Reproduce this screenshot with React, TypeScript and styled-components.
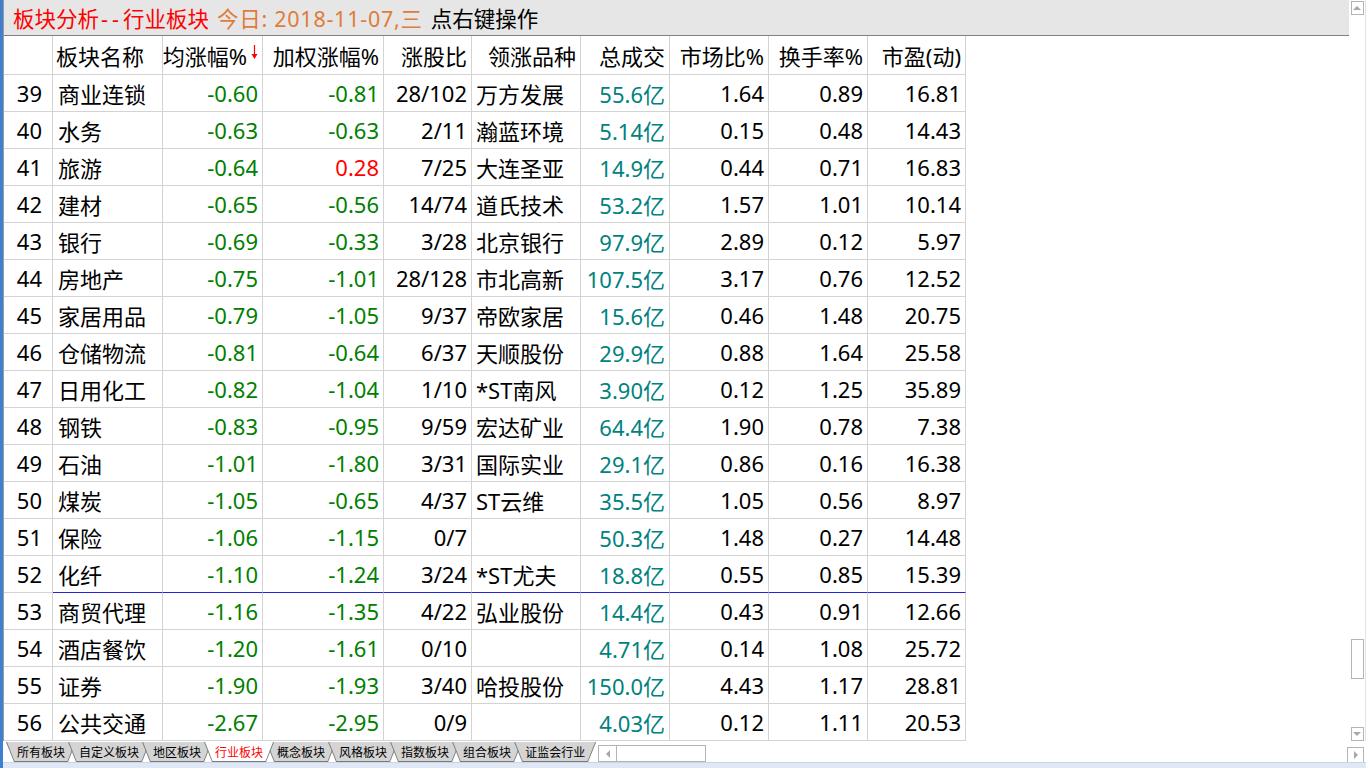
import styled, { createGlobalStyle } from "styled-components";

const GlobalStyle = createGlobalStyle`
  html, body {
    margin: 0;
    padding: 0;
    background: #ffffff;
    overflow: hidden;
  }
  body {
    font-family: "Noto Sans", "Noto Sans CJK SC", sans-serif;
  }
`;

const COLS = "49px 110px 100px 121px 88px 109px 89px 99px 99px 98px";

type Row = {
  no: number;
  name: string;
  avg: string;
  weighted: string;
  up: string;
  leader: string;
  volume: string;
  share: string;
  turnover: string;
  pe: string;
};

const rows: Row[] = [
  { no: 39, name: "商业连锁", avg: "-0.60", weighted: "-0.81", up: "28/102", leader: "万方发展", volume: "55.6亿", share: "1.64", turnover: "0.89", pe: "16.81" },
  { no: 40, name: "水务", avg: "-0.63", weighted: "-0.63", up: "2/11", leader: "瀚蓝环境", volume: "5.14亿", share: "0.15", turnover: "0.48", pe: "14.43" },
  { no: 41, name: "旅游", avg: "-0.64", weighted: "0.28", up: "7/25", leader: "大连圣亚", volume: "14.9亿", share: "0.44", turnover: "0.71", pe: "16.83" },
  { no: 42, name: "建材", avg: "-0.65", weighted: "-0.56", up: "14/74", leader: "道氏技术", volume: "53.2亿", share: "1.57", turnover: "1.01", pe: "10.14" },
  { no: 43, name: "银行", avg: "-0.69", weighted: "-0.33", up: "3/28", leader: "北京银行", volume: "97.9亿", share: "2.89", turnover: "0.12", pe: "5.97" },
  { no: 44, name: "房地产", avg: "-0.75", weighted: "-1.01", up: "28/128", leader: "市北高新", volume: "107.5亿", share: "3.17", turnover: "0.76", pe: "12.52" },
  { no: 45, name: "家居用品", avg: "-0.79", weighted: "-1.05", up: "9/37", leader: "帝欧家居", volume: "15.6亿", share: "0.46", turnover: "1.48", pe: "20.75" },
  { no: 46, name: "仓储物流", avg: "-0.81", weighted: "-0.64", up: "6/37", leader: "天顺股份", volume: "29.9亿", share: "0.88", turnover: "1.64", pe: "25.58" },
  { no: 47, name: "日用化工", avg: "-0.82", weighted: "-1.04", up: "1/10", leader: "*ST南风", volume: "3.90亿", share: "0.12", turnover: "1.25", pe: "35.89" },
  { no: 48, name: "钢铁", avg: "-0.83", weighted: "-0.95", up: "9/59", leader: "宏达矿业", volume: "64.4亿", share: "1.90", turnover: "0.78", pe: "7.38" },
  { no: 49, name: "石油", avg: "-1.01", weighted: "-1.80", up: "3/31", leader: "国际实业", volume: "29.1亿", share: "0.86", turnover: "0.16", pe: "16.38" },
  { no: 50, name: "煤炭", avg: "-1.05", weighted: "-0.65", up: "4/37", leader: "ST云维", volume: "35.5亿", share: "1.05", turnover: "0.56", pe: "8.97" },
  { no: 51, name: "保险", avg: "-1.06", weighted: "-1.15", up: "0/7", leader: "", volume: "50.3亿", share: "1.48", turnover: "0.27", pe: "14.48" },
  { no: 52, name: "化纤", avg: "-1.10", weighted: "-1.24", up: "3/24", leader: "*ST尤夫", volume: "18.8亿", share: "0.55", turnover: "0.85", pe: "15.39" },
  { no: 53, name: "商贸代理", avg: "-1.16", weighted: "-1.35", up: "4/22", leader: "弘业股份", volume: "14.4亿", share: "0.43", turnover: "0.91", pe: "12.66" },
  { no: 54, name: "酒店餐饮", avg: "-1.20", weighted: "-1.61", up: "0/10", leader: "", volume: "4.71亿", share: "0.14", turnover: "1.08", pe: "25.72" },
  { no: 55, name: "证券", avg: "-1.90", weighted: "-1.93", up: "3/40", leader: "哈投股份", volume: "150.0亿", share: "4.43", turnover: "1.17", pe: "28.81" },
  { no: 56, name: "公共交通", avg: "-2.67", weighted: "-2.95", up: "0/9", leader: "", volume: "4.03亿", share: "0.12", turnover: "1.11", pe: "20.53" },
];

const tabs = ["所有板块", "自定义板块", "地区板块", "行业板块", "概念板块", "风格板块", "指数板块", "组合板块", "证监会行业"];

const MARKED_ROW = 52;

const changeColor = (v: string) => (v.startsWith("-") ? "#008000" : "#ff0000");

function SortArrow() {
  return (
    <svg width="7" height="16" viewBox="0 0 7 16">
      <path d="M3.5 1 V12" stroke="#ff0000" strokeWidth="1.2" />
      <path d="M0.5 10 L3.5 15 L6.5 10 Z" fill="#ff0000" />
    </svg>
  );
}

function App() {
  return (
    <>
      <GlobalStyle />
      <Screen>
        <Body>
          <Main>
            <TitleBar>
              <TitleText $color="#ff0000">
                板块分析<Dash>--</Dash>行业板块
              </TitleText>
              <TitleText $color="#e07b39" $spacing="0.75px">
                今日: 2018-11-07,三
              </TitleText>
              <TitleText $color="#000000">点右键操作</TitleText>
            </TitleBar>
            <HeaderRow>
              <HeadCell />
              <HeadCell $align="left">板块名称</HeadCell>
              <HeadCell>
                均涨幅%
                <ArrowBox>
                  <SortArrow />
                </ArrowBox>
              </HeadCell>
              <HeadCell>加权涨幅%</HeadCell>
              <HeadCell>涨股比</HeadCell>
              <HeadCell>领涨品种</HeadCell>
              <HeadCell>总成交</HeadCell>
              <HeadCell>市场比%</HeadCell>
              <HeadCell>换手率%</HeadCell>
              <HeadCell>市盈(动)</HeadCell>
            </HeaderRow>
            {rows.map((r) => {
              const marked = r.no === MARKED_ROW;
              return (
                <DataRow key={r.no}>
                  <Cell $pad="0 10px 0 0">{r.no}</Cell>
                  <Cell $align="left" $pad="0 0 0 5px" $marked={marked}>
                    {r.name}
                  </Cell>
                  <Cell $color={changeColor(r.avg)} $marked={marked}>
                    {r.avg}
                  </Cell>
                  <Cell $color={changeColor(r.weighted)} $marked={marked}>
                    {r.weighted}
                  </Cell>
                  <Cell $marked={marked}>{r.up}</Cell>
                  <Cell $align="left" $pad="0 0 0 4px" $marked={marked}>
                    {r.leader}
                  </Cell>
                  <Cell $color="#00827e" $marked={marked}>
                    {r.volume}
                  </Cell>
                  <Cell $marked={marked}>{r.share}</Cell>
                  <Cell $marked={marked}>{r.turnover}</Cell>
                  <Cell $marked={marked}>{r.pe}</Cell>
                </DataRow>
              );
            })}
          </Main>
          <VScroll>
            <ScrollBtn>
              <TriUp />
            </ScrollBtn>
            <Thumb />
            <DownBtn>
              <TriDown />
            </DownBtn>
          </VScroll>
        </Body>
        <BottomBar>
          <TabStrip>
            {tabs.map((t) => (
              <Tab key={t} $active={t === "行业板块"}>
                <TabFace $active={t === "行业板块"}>{t}</TabFace>
              </Tab>
            ))}
          </TabStrip>
          <HScroll>
            <HScrollBtn>
              <TriLeft />
            </HScrollBtn>
          </HScroll>
          <RightBtn>
            <TriRight />
          </RightBtn>
        </BottomBar>
        <StatusStrip />
      </Screen>
    </>
  );
}

export default App;

const Screen = styled.div`
  width: 1366px;
  height: 768px;
  display: flex;
  flex-direction: column;
  border-left: 3px solid #3f7fd2;
  box-sizing: border-box;
  background: #ffffff;
`;

const Body = styled.div`
  height: 741px;
  display: flex;
`;

const Main = styled.div`
  flex: 1;
  border-left: 1px solid #9a9a9a;
  display: flex;
  flex-direction: column;
`;

const TitleBar = styled.div`
  height: 35px;
  border-bottom: 1px solid #808080;
  background: #e6e6e6;
  display: flex;
  align-items: center;
  gap: 8px;
  padding-left: 9px;
  font-family: "Noto Sans", "Noto Sans CJK SC", sans-serif;
  font-size: 21.5px;
`;

const TitleText = styled.span<{ $color: string; $spacing?: string }>`
  color: ${(p) => p.$color};
  letter-spacing: ${(p) => p.$spacing ?? "0"};
  white-space: nowrap;
`;

const Dash = styled.span`
  letter-spacing: 4px;
  margin-left: 2px;
`;

const HeaderRow = styled.div`
  display: grid;
  grid-template-columns: ${COLS};
  height: 39px;
`;

const DataRow = styled.div`
  display: grid;
  grid-template-columns: ${COLS};
  height: 37px;
`;

const Cell = styled.div<{ $align?: "left" | "right"; $color?: string; $pad?: string; $marked?: boolean }>`
  box-sizing: border-box;
  display: flex;
  align-items: center;
  justify-content: ${(p) => (p.$align === "left" ? "flex-start" : "flex-end")};
  padding: ${(p) => p.$pad ?? "0 4px 0 0"};
  border-right: 1px solid #d3d3d3;
  border-bottom: 1px solid ${(p) => (p.$marked ? "#2323d8" : "#d3d3d3")};
  color: ${(p) => p.$color ?? "#000000"};
  font-size: 22px;
  white-space: nowrap;
  overflow: hidden;
`;

const HeadCell = styled(Cell).attrs<{ $align?: "left" | "right" }>((p) => ({
  $pad: p.$align === "left" ? "0 0 0 3px" : "0 4px 0 0",
}))``;

const ArrowBox = styled.span`
  display: flex;
  margin-left: 4px;
  margin-top: -6px;
`;

const VScroll = styled.div`
  width: 17px;
  box-sizing: border-box;
  border-right: 1px solid #e2e2e2;
  display: flex;
  flex-direction: column;
  align-items: center;
`;

const ScrollBtn = styled.div`
  width: 13px;
  height: 14px;
  margin-top: 1px;
  box-sizing: border-box;
  border: 1px solid #b4b4b4;
  background: #ffffff;
  display: flex;
  align-items: center;
  justify-content: center;
`;

const DownBtn = styled(ScrollBtn)`
  margin-top: auto;
  margin-bottom: 0;
`;

const Thumb = styled.div`
  width: 13px;
  height: 40px;
  margin-top: 624px;
  box-sizing: border-box;
  border: 1px solid #b4b4b4;
  background: #ffffff;
`;

const TriUp = styled.span`
  width: 0;
  height: 0;
  border-left: 4px solid transparent;
  border-right: 4px solid transparent;
  border-bottom: 4px solid #a8a8a8;
`;

const TriDown = styled.span`
  width: 0;
  height: 0;
  border-left: 4px solid transparent;
  border-right: 4px solid transparent;
  border-top: 4px solid #a8a8a8;
`;

const TriLeft = styled.span`
  width: 0;
  height: 0;
  border-top: 4px solid transparent;
  border-bottom: 4px solid transparent;
  border-right: 4px solid #a8a8a8;
`;

const TriRight = styled.span`
  width: 0;
  height: 0;
  border-top: 4px solid transparent;
  border-bottom: 4px solid transparent;
  border-left: 4px solid #a8a8a8;
`;

const BottomBar = styled.div`
  height: 21px;
  display: flex;
  align-items: flex-start;
  padding-left: 3px;
`;

const TabStrip = styled.div`
  display: flex;
  height: 20px;
  margin-top: 1px;
`;

const Tab = styled.div<{ $active?: boolean }>`
  position: relative;
  z-index: ${(p) => (p.$active ? 2 : 1)};
  height: 20px;
  box-sizing: border-box;
  padding: 0 1px 1px;
  margin-left: -8px;
  background: #7a7a7a;
  clip-path: polygon(0 0, 100% 0, calc(100% - 8px) 100%, 8px 100%);

  &:first-child {
    margin-left: 0;
  }
`;

const TabFace = styled.div<{ $active?: boolean }>`
  height: 100%;
  padding: 0 10px;
  display: flex;
  align-items: center;
  background: ${(p) => (p.$active ? "#ffffff" : "#d4d4d4")};
  color: ${(p) => (p.$active ? "#ff0000" : "#000000")};
  font-family: "Noto Sans CJK SC", sans-serif;
  font-size: 12px;
  white-space: nowrap;
  clip-path: polygon(0 0, 100% 0, calc(100% - 7.5px) 100%, 7.5px 100%);
`;

const HScroll = styled.div`
  width: 108px;
  height: 17px;
  margin-top: 4px;
  margin-left: 2px;
  box-sizing: border-box;
  border: 1px solid #b4b4b4;
  display: flex;
`;

const HScrollBtn = styled.div`
  width: 17px;
  border-right: 1px solid #b4b4b4;
  display: flex;
  align-items: center;
  justify-content: center;
`;

const RightBtn = styled.div`
  width: 17px;
  height: 16px;
  margin-top: 6px;
  margin-left: auto;
  margin-right: 2px;
  box-sizing: border-box;
  border: 1px solid #b4b4b4;
  display: flex;
  align-items: center;
  justify-content: center;
`;

const StatusStrip = styled.div`
  flex: 1;
  background: #dfe8f4;
  border-top: 1px solid #c9d6e8;
`;
